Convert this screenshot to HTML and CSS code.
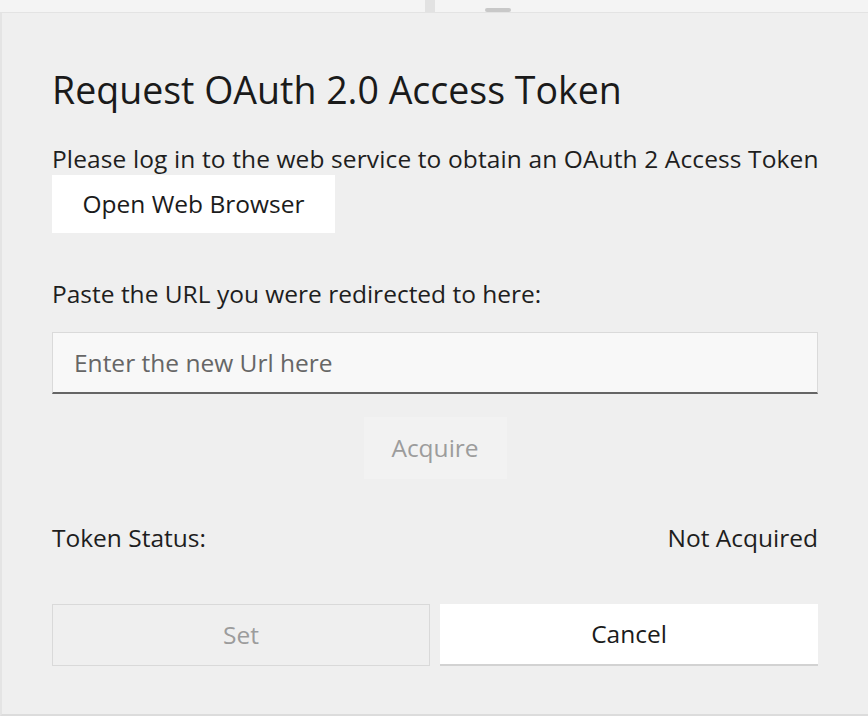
FILE: index.html
```html
<!DOCTYPE html>
<html lang="en">
<head>
<meta charset="utf-8">
<title>Request OAuth 2.0 Access Token</title>
<link rel="stylesheet" href="styles.css">
</head>
<body>
<div class="backdrop">
  <div class="backdrop-bar"></div>
  <div class="backdrop-chip"></div>
</div>
<div class="dialog">
  <h1 class="title">Request OAuth 2.0 Access Token</h1>
  <p class="text intro">Please log in to the web service to obtain an OAuth 2 Access Token</p>
  <button class="btn btn-open">Open Web Browser</button>
  <p class="text paste-label">Paste the URL you were redirected to here:</p>
  <div class="textbox"><span class="placeholder">Enter the new Url here</span></div>
  <div class="acquire-row"><button class="btn btn-acquire" disabled>Acquire</button></div>
  <div class="status-row">
    <span class="text">Token Status:</span>
    <span class="text">Not Acquired</span>
  </div>
  <div class="actions">
    <button class="btn btn-set" disabled>Set</button>
    <button class="btn btn-cancel">Cancel</button>
  </div>
</div>
</body>
</html>
```

FILE: styles.css
```css
html, body {
  margin: 0;
  padding: 0;
  background: #f4f4f4;
  font-family: "Open Sans", "Noto Sans", sans-serif;
  color: #1b1b1b;
  overflow: hidden;
}

.backdrop {
  height: 12px;
  display: flex;
  align-items: flex-start;
  padding-left: 425px;
  gap: 50px;
}

.backdrop-bar {
  width: 10px;
  height: 12px;
  background: #e2e2e2;
}

.backdrop-chip {
  width: 26px;
  height: 4px;
  margin-top: 8px;
  background: #c8c8c8;
  border-radius: 2px;
}

.dialog {
  background: #efefef;
  border-top: 1px solid #e3e3e3;
  border-left: 2px solid #e4e4e4;
  border-bottom: 2px solid #dcdcdc;
  box-sizing: border-box;
  height: 704px;
  padding: 52.5px 50px 0 50px;
}

.title {
  margin: 0;
  font-size: 37.5px;
  line-height: 48px;
  font-weight: 400;
  color: #1a1a1a;
}

.text {
  font-size: 24.5px;
  line-height: 32px;
  margin: 0;
  color: #1e1e1e;
  white-space: nowrap;
}

.intro {
  margin-top: 29px;
  letter-spacing: 0.12px;
}

.btn {
  font-family: inherit;
  font-size: 24.5px;
  border: none;
  margin: 0;
  padding: 0;
  height: 62px;
  color: #1b1b1b;
}

.btn-open {
  display: block;
  margin-top: 0;
  height: 58px;
  width: 283px;
  background: #ffffff;
}

.paste-label {
  margin-top: 45px;
}

.textbox {
  margin-top: 22px;
  height: 62px;
  box-sizing: border-box;
  background: #f8f8f8;
  border: 1px solid #dadada;
  border-bottom: 2px solid #656565;
  display: flex;
  align-items: center;
  padding-left: 21px;
}

.placeholder {
  font-size: 24.5px;
  color: #666666;
}

.acquire-row {
  display: flex;
  justify-content: center;
  margin-top: 23px;
}

.btn-acquire {
  width: 143px;
  background: #f2f2f2;
  color: #9c9c9c;
}

.status-row {
  margin-top: 43px;
  display: flex;
  justify-content: space-between;
}

.actions {
  margin-top: 50px;
  display: grid;
  grid-template-columns: 1fr 1fr;
  gap: 10px;
}

.btn-set {
  background: #efefef;
  border: 1px solid #d9d9d9;
  color: #9c9c9c;
}

.btn-cancel {
  background: #ffffff;
  border-bottom: 2px solid #d2d2d2;
}
```
